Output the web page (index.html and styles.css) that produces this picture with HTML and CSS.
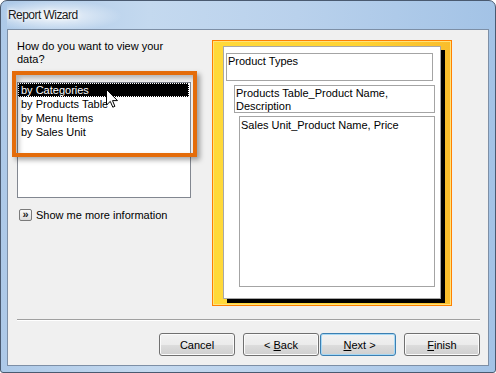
FILE: index.html
```html
<!DOCTYPE html>
<html lang="en">
<head>
    <meta charset="UTF-8">
    <title>Report Wizard</title>
    <link rel="stylesheet" href="styles.css">
</head>
<body>
<div class="window">
    <div class="titlebar"><span class="title">Report Wizard</span></div>
    <div class="client">
        <div class="top">
            <div class="left">
                <p class="prompt">How do you want to view your data?</p>
                <div class="listbox">
                    <div class="item selected">by Categories</div>
                    <div class="item">by Products Table</div>
                    <div class="item">by Menu Items</div>
                    <div class="item">by Sales Unit</div>
                </div>
                <div class="more">
                    <span class="more-icon">&raquo;</span>
                    <span>Show me more information</span>
                </div>
            </div>
            <div class="preview">
                <div class="page">
                    <div class="box box1">Product Types</div>
                    <div class="box box2">Products Table_Product Name, Description</div>
                    <div class="box box3">Sales Unit_Product Name, Price</div>
                </div>
            </div>
        </div>
        <div class="separator"></div>
        <div class="buttons">
            <button class="btn">Cancel</button>
            <button class="btn back">&lt; <u>B</u>ack</button>
            <button class="btn default">&nbsp;<u>N</u>ext &gt;</button>
            <button class="btn finish"><u>F</u>inish</button>
        </div>
    </div>

    <!-- annotation overlay -->
    <div class="highlight"></div>
    <svg class="cursor" width="12" height="19" viewBox="0 0 12 19">
        <path d="M0.5 0.5 L0.5 16 L4.3 12.4 L6.8 18.2 L8.9 17.3 L6.5 11.6 L11.5 11.6 Z" fill="#fff" stroke="#000" stroke-width="1" stroke-linejoin="miter"/>
    </svg>
</div>
</body>
</html>
```

FILE: styles.css
```css
* { box-sizing: border-box; }
html, body { margin: 0; padding: 0; }
body { font-family: "Liberation Sans", Arial, sans-serif; font-size: 11px; color: #000; width: 496px; height: 373px; overflow: hidden; }

.window { position: relative; width: 496px; height: 373px; border: 1px solid #4a5a70; border-radius: 7px 7px 3px 3px; padding: 0 6px 6px 6px; display: flex; flex-direction: column;
    background: linear-gradient(to right, #adc9e8 0%, #c4d9ef 30%, #b9d1ec 60%, #a3c3e6 100%); }
.titlebar { height: 28px; display: flex; align-items: center; padding-left: 1px;
    background: radial-gradient(ellipse 70px 16px at 45px 15px, rgba(255,255,255,0.85), rgba(255,255,255,0) 100%); }
.title { font-size: 12px; letter-spacing: -0.55px; color: #1a1a1a; text-shadow: 0 0 6px #fff, 0 0 3px #fff; }

.client { flex: 1; background: #f0f0f0; border: 1px solid #7d8fa6; padding: 10px 8px 0 9px; display: flex; flex-direction: column; }
.top { display: flex; height: 266px; }
.left { width: 175px; }
.prompt { margin: 0; line-height: 13px; width: 160px; }
.listbox { margin-top: 16px; width: 174px; height: 116px; border: 1px solid #828790; background: #fff; }
.item { height: 14px; line-height: 12px; padding-left: 2px; border: 1px solid transparent; margin-right: 1px; white-space: nowrap; }
.item.selected { background: #000; color: #fff; border: 1px dotted #fff; }

.more { margin-top: 11px; display: flex; align-items: center; height: 12px; margin-left: 2px; }
.more-icon { width: 13px; height: 12px; border: 1px solid #7a7a7a; border-radius: 2px; background: linear-gradient(#fafafa, #dcdcdc); font-size: 11px; line-height: 9px; text-align: center; color: #1a1a1a; margin-right: 4px; font-weight: bold; }

.preview { margin-left: 20px; width: 240px; height: 266px; border: 1px solid #ff8000; padding: 5px 0 0 10px;
    box-shadow: inset 0 0 0 1px #ffe27a;
    background: linear-gradient(to right, #ffd93a 0%, #ffd433 60%, #f9bd2c 100%); }
.page { width: 218px; height: 253px; background: #fff; border: 1px solid #a8a8a8; box-shadow: 4px 4px 0 #000; }
.box { border: 1px solid #a4a4a4; line-height: 13px; padding: 1px 0 0 1px; }
.box1 { margin: 6px 0 0 2px; width: 207px; height: 28px; padding-left: 1px; }
.box2 { margin: 4px 0 0 10px; width: 201px; height: 28px; }
.box3 { margin: 3px 0 0 15px; width: 196px; height: 171px; padding-top: 2px; }

.separator { margin-top: 13px; border-top: 1px solid #a0a0a0; border-bottom: 1px solid #fff; }
.buttons { margin-top: 12px; display: flex; justify-content: flex-end; }
.btn { width: 76px; height: 23px; margin: 0; padding: 0; font-family: inherit; font-size: 11px; color: #000; border: 1px solid #707070; border-radius: 3px;
    background: linear-gradient(#f2f2f2 0%, #ebebeb 50%, #dddddd 51%, #cfcfcf 100%); box-shadow: inset 0 0 0 1px #fbfbfb; }
.btn.back { margin-left: 8px; }
.btn.default { margin-left: 1px; border-color: #3c7fb1; box-shadow: inset 0 0 0 1px #a6d8f5; }
.btn.finish { margin-left: 8px; }
.btn u { text-decoration: underline; }

.highlight { position: absolute; left: 11px; top: 70px; width: 185px; height: 86px; border: 4px solid #e46c0a;
    box-shadow: 3px 3px 5px rgba(0,0,0,0.35), inset 3px 3px 5px rgba(0,0,0,0.25); }
.cursor { position: absolute; left: 105px; top: 88px; }
```
